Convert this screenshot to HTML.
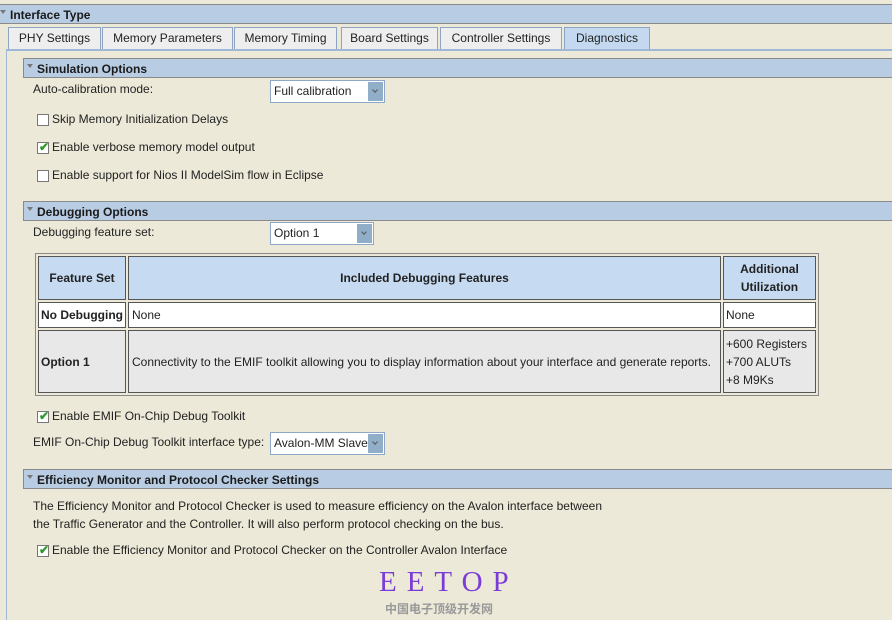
<!DOCTYPE html>
<html><head><style>
body{margin:0;width:892px;height:620px;background:#ece9d8;font-family:"Liberation Sans",Arial,sans-serif;font-size:12px;color:#222;position:relative;overflow:hidden}
.a{position:absolute;white-space:nowrap}
.bar{position:absolute;background:#b8cde4;border-top:1px solid #8a8a8a;border-bottom:1px solid #8a8a8a;border-left:1px solid #8a8a8a;font-weight:bold;font-size:12px;color:#1a1a1a;box-sizing:border-box}
.bar .t{position:absolute;left:3px;top:5px;width:0;height:0;border-left:3px solid transparent;border-right:3px solid transparent;border-top:4px solid #777}
.bar span{position:absolute;left:13px;top:3px}
.tab{position:absolute;top:27px;height:22px;background:#eeeeee;border:1px solid #8fa4c0;border-bottom:none;box-sizing:border-box;font-size:12px;text-align:center;line-height:20px;color:#222}
.sel{position:absolute;height:23px;background:#fff;border:1px solid #8fa8c8;box-sizing:border-box;font-size:12px;line-height:21px;padding-left:3px}
.sel b{position:absolute;right:1px;top:1px;bottom:1px;width:15px;background:#91aec9}
.sel b:after{content:"";position:absolute;left:5px;top:6px;width:3px;height:3px;border-right:1px solid #555;border-bottom:1px solid #555;transform:rotate(45deg)}
.cb{position:absolute;width:10px;height:10px;border:1px solid #777;background:#fff}
.ck{position:absolute;left:1px;top:-3px;color:#2a9a2a;font-size:12px;font-weight:bold}
table{position:absolute;left:35px;top:253px;border-collapse:separate;border-spacing:2px;border:1px solid #888;background:#ece9d8;table-layout:fixed}
td{border:1px solid #555;font-size:12px;padding:0 3px;box-sizing:border-box;white-space:nowrap;overflow:hidden}
</style></head><body>
<div class="bar" style="left:0;top:4px;width:892px;height:20px;border-left:none"><div class="t" style="left:0"></div><span style="left:10px">Interface Type</span></div>
<div class="tab" style="left:8px;width:93px">PHY Settings</div>
<div class="tab" style="left:102px;width:131px">Memory Parameters</div>
<div class="tab" style="left:234px;width:103px">Memory Timing</div>
<div class="tab" style="left:341px;width:97px">Board Settings</div>
<div class="tab" style="left:440px;width:122px">Controller Settings</div>
<div class="tab" style="left:564px;width:86px;background:#c4d9f0;height:23px">Diagnostics</div>
<div class="a" style="left:6px;top:49px;width:886px;height:2px;background:#9fb8d8"></div>
<div class="a" style="left:6px;top:49px;width:1px;height:571px;background:#9fb8d8"></div>

<div class="bar" style="left:23px;top:58px;width:869px;height:20px;border-right:none"><div class="t"></div><span>Simulation Options</span></div>
<div class="a" style="left:33px;top:82px">Auto-calibration mode:</div>
<div class="sel" style="left:270px;top:80px;width:115px">Full calibration<b></b></div>
<div class="cb" style="left:37px;top:114px"></div><div class="a" style="left:52px;top:112px">Skip Memory Initialization Delays</div>
<div class="cb" style="left:37px;top:142px"><span class="ck">✔</span></div><div class="a" style="left:52px;top:140px">Enable verbose memory model output</div>
<div class="cb" style="left:37px;top:170px"></div><div class="a" style="left:52px;top:168px">Enable support for Nios II ModelSim flow in Eclipse</div>

<div class="bar" style="left:23px;top:201px;width:869px;height:20px"><div class="t"></div><span>Debugging Options</span></div>
<div class="a" style="left:33px;top:225px">Debugging feature set:</div>
<div class="sel" style="left:270px;top:222px;width:104px">Option 1<b></b></div>

<table>
<colgroup><col style="width:85px"><col style="width:593px"><col style="width:93px"></colgroup>
<tr style="height:44px;background:#c6daf1"><td style="text-align:center;font-weight:bold">Feature Set</td><td style="text-align:center;font-weight:bold">Included Debugging Features</td><td style="text-align:center;font-weight:bold;line-height:18px">Additional<br>Utilization</td></tr>
<tr style="height:26px;background:#fff"><td style="font-weight:bold;padding:0 2px">No Debugging</td><td>None</td><td style="padding:0 2px">None</td></tr>
<tr style="height:63px;background:#e8e8e8"><td style="font-weight:bold;padding:0 2px">Option 1</td><td>Connectivity to the EMIF toolkit allowing you to display information about your interface and generate reports.</td><td style="line-height:18px;padding:0 2px">+600 Registers<br>+700 ALUTs<br>+8 M9Ks</td></tr>
</table>

<div class="cb" style="left:37px;top:411px"><span class="ck">✔</span></div><div class="a" style="left:52px;top:409px">Enable EMIF On-Chip Debug Toolkit</div>
<div class="a" style="left:33px;top:435px">EMIF On-Chip Debug Toolkit interface type:</div>
<div class="sel" style="left:270px;top:432px;width:115px">Avalon-MM Slave<b></b></div>

<div class="bar" style="left:23px;top:469px;width:869px;height:20px"><div class="t"></div><span>Efficiency Monitor and Protocol Checker Settings</span></div>
<div class="a" style="left:33px;top:499px">The Efficiency Monitor and Protocol Checker is used to measure efficiency on the Avalon interface between</div>
<div class="a" style="left:33px;top:517px">the Traffic Generator and the Controller. It will also perform protocol checking on the bus.</div>
<div class="cb" style="left:37px;top:545px"><span class="ck">✔</span></div><div class="a" style="left:52px;top:543px">Enable the Efficiency Monitor and Protocol Checker on the Controller Avalon Interface</div>

<div class="a" style="left:379px;top:566px;font-family:'Liberation Serif',serif;font-size:29px;color:#7a3bd6;letter-spacing:10px">EETOP</div>
<div class="a" style="left:385px;top:600px;font-family:'Liberation Sans','Noto Sans CJK SC',sans-serif;font-size:12px;font-weight:bold;color:#999">中国电子顶级开发网</div>
</body></html>
